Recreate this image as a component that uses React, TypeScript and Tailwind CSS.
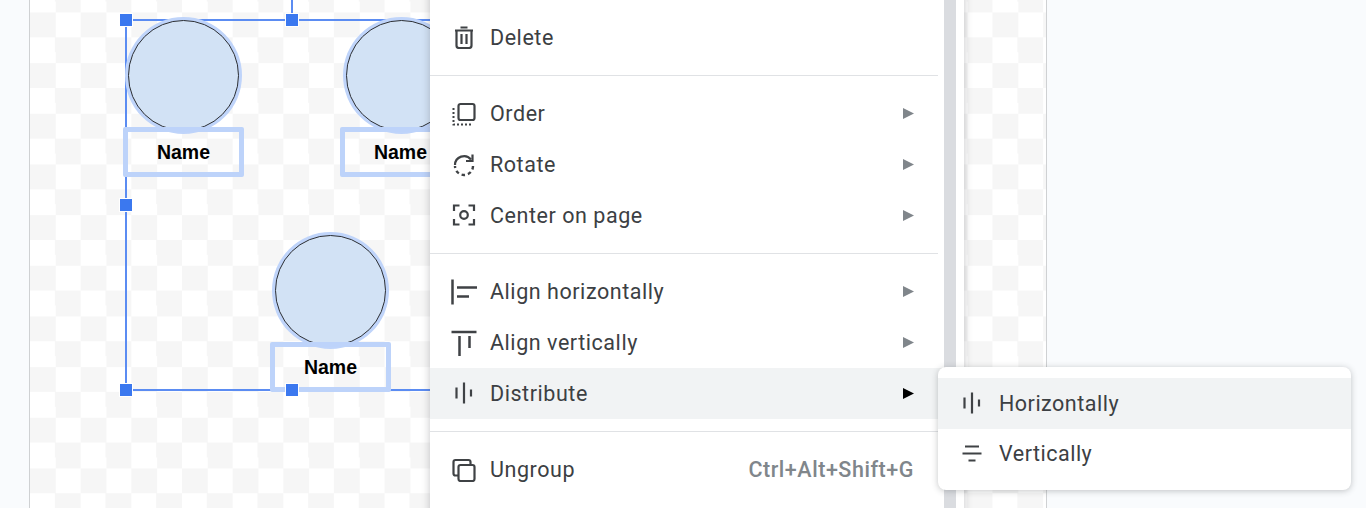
const stroke = { fill: "none", stroke: "#3f4245", strokeWidth: 2.2 };

function Handle({ x, y }: { x: number; y: number }) {
  return (
    <div
      className="absolute h-[14px] w-[14px] border border-white bg-[#3b78ef]"
      style={{ left: x - 37, top: y - 7 }}
    />
  );
}

function Person({ cx, cy, bx, by }: { cx: number; cy: number; bx: number; by: number }) {
  return (
    <>
      <div
        className="absolute h-[111px] w-[111px] rounded-full border-[1.5px] border-[#2b2e33] bg-[#d2e2f5] shadow-[0_0_0_3px_#bfd4fa]"
        style={{ left: cx - 85.5, top: cy - 55.5 }}
      />
      <div
        className="absolute flex h-[50px] w-[121px] items-center justify-center rounded-[2px] border-[5px] border-[#bdd3fa] pt-[1px] font-['Liberation_Sans',sans-serif] text-[19.500px] font-bold text-black"
        style={{ left: bx - 30, top: by }}
      >
        Name
      </div>
    </>
  );
}

function Arrow({ dark }: { dark?: boolean }) {
  return (
    <svg width="11" height="11" viewBox="0 0 11 11" className="shrink-0">
      <path d="M0 0L11 5.5L0 11Z" fill={dark ? "#000000" : "#80868b"} />
    </svg>
  );
}

function DeleteIcon() {
  return (
    <svg width="24" height="24" viewBox="0 0 24 24" className="-mt-[1px]">
      <path d="M3 5.500H21M8.500 2.500H15.500" {...stroke} />
      <path d="M4.500 6V20.500Q4.500 23 7 23H17Q19.500 23 19.500 20.500V6" {...stroke} />
      <path d="M9.500 9V19M14.500 9V19" {...stroke} />
    </svg>
  );
}

function OrderIcon() {
  return (
    <svg width="24" height="24" viewBox="0 0 24 24">
      <rect x="6.500" y="2" width="16" height="16" rx="2" {...stroke} />
      <path d="M1.500 6V22.500H19" fill="none" stroke="#3f4245" strokeWidth="2" strokeDasharray="2 2" />
    </svg>
  );
}

function RotateIcon() {
  return (
    <svg width="24" height="24" viewBox="0 0 24 24">
      <path d="M3 12A9 9 0 0 1 19 6.500" {...stroke} />
      <path d="M20.500 1.500V8H14" {...stroke} />
      <path d="M21 13A9 9 0 0 1 3 13" fill="none" stroke="#3f4245" strokeWidth="2.400" strokeDasharray="3.500 3" />
    </svg>
  );
}

function CenterIcon() {
  return (
    <svg width="24" height="24" viewBox="0 0 24 24">
      <path d="M2 8V2.500H7.500M16.500 2.500H22V8M22 16V21.500H16.500M7.500 21.500H2V16" {...stroke} />
      <circle cx="12" cy="12" r="3.800" {...stroke} />
    </svg>
  );
}

function AlignHIcon() {
  return (
    <svg width="28" height="28" viewBox="0 0 28 28">
      <path d="M2.500 1.500V26.500" fill="none" stroke="#3f4245" strokeWidth="2.500" />
      <path d="M7 9.500H27M7 18.500H19" fill="none" stroke="#3f4245" strokeWidth="2.500" />
    </svg>
  );
}

function AlignVIcon() {
  return (
    <svg width="28" height="28" viewBox="0 0 28 28">
      <path d="M1.500 3H26.500" fill="none" stroke="#3f4245" strokeWidth="2.500" />
      <path d="M9.500 7V27M19.500 7V19" fill="none" stroke="#3f4245" strokeWidth="2.500" />
    </svg>
  );
}

function DistributeHIcon() {
  return (
    <svg width="24" height="24" viewBox="0 0 24 24">
      <path d="M4.500 6.500V17.500M12 1.500V22.500M19 8.500V15.500" fill="none" stroke="#3f4245" strokeWidth="2.200" />
    </svg>
  );
}

function DistributeVIcon() {
  return (
    <svg width="24" height="24" viewBox="0 0 24 24">
      <path d="M5 4.500H19M2.500 11.500H21.500M8.500 18.500H15.500" fill="none" stroke="#3f4245" strokeWidth="2.200" />
    </svg>
  );
}

function UngroupIcon() {
  return (
    <svg width="24" height="24" viewBox="0 0 24 24">
      <path d="M7 17.500H3.500Q1.500 17.500 1.500 15.500V4Q1.500 2 3.500 2H16.500Q18.500 2 18.500 4V7" {...stroke} />
      <rect x="6.500" y="7" width="16" height="16" rx="2" {...stroke} />
    </svg>
  );
}

function Row({
  icon,
  label,
  arrow,
  active,
  shortcut,
}: {
  icon: React.ReactNode;
  label: string;
  arrow?: boolean;
  active?: boolean;
  shortcut?: string;
}) {
  return (
    <div className={`flex h-[50.67px] items-center pr-[30px] ${active ? "bg-[#f1f3f4]" : ""}`}>
      <div className="flex w-[60px] shrink-0 items-center justify-center pl-[7px]">{icon}</div>
      <span className="flex-1 pt-[1px] text-[21.500px] tracking-[0.55px] text-[#3c4043]">{label}</span>
      {shortcut && <span className="text-[21.500px] font-medium tracking-[0.55px] text-[#80868b]">{shortcut}</span>}
      {arrow && <Arrow dark={active} />}
    </div>
  );
}

function Divider() {
  return <div className="my-[12.500px] mr-[6px] h-px bg-[#e0e2e5]" />;
}

export default function App() {
  return (
    <div className="relative flex h-[508px] w-[1366px] overflow-hidden bg-[#f9fbfd] font-['Roboto',sans-serif]">
      <div className="w-[29px] shrink-0" />

      <div className="relative h-full w-[1018px] shrink-0 border-x border-x-[#cfd1d3] bg-white bg-[repeating-conic-gradient(#f6f6f6_0_25%,#ffffff_0_50%)] bg-size-[50.67px_50.67px] bg-position-[0px_-13.33px]">
        {/* selection outline */}
        <div className="absolute left-[95px] top-[19px] h-[372px] w-[600px] border-b-2 border-l-2 border-t-2 border-[#5b8cf2]" />
        <div className="absolute left-[261px] top-0 h-[15px] w-[2px] bg-[#5b8cf2]" />

        <Person cx={183.500} cy={75} bx={123} by={127} />
        <Person cx={401} cy={75} bx={340} by={127} />
        <Person cx={330.500} cy={290} bx={270} by={342} />

        <Handle x={126} y={20} />
        <Handle x={292} y={20} />
        <Handle x={126} y={205} />
        <Handle x={126} y={390} />
        <Handle x={292} y={390} />
      </div>

      {/* context menu, clipped by the window */}
      <div className="absolute left-[430px] top-[-30px] flex h-[560px] w-[534px] bg-white shadow-[0_0_8px_rgba(60,64,67,0.3)]">
        <div className="w-[514px] shrink-0 pt-[42px]">
          <Row icon={<DeleteIcon />} label="Delete" />
          <Divider />
          <Row icon={<OrderIcon />} label="Order" arrow />
          <Row icon={<RotateIcon />} label="Rotate" arrow />
          <Row icon={<CenterIcon />} label="Center on page" arrow />
          <Divider />
          <Row icon={<AlignHIcon />} label="Align horizontally" arrow />
          <Row icon={<AlignVIcon />} label="Align vertically" arrow />
          <Row icon={<DistributeHIcon />} label="Distribute" arrow active />
          <Divider />
          <Row icon={<UngroupIcon />} label="Ungroup" shortcut="Ctrl+Alt+Shift+G" />
        </div>
        <div className="h-full w-[12px] bg-[#dadce0]" />
      </div>

      {/* submenu */}
      <div className="absolute left-[938px] top-[367px] w-[413px] rounded-[8px] bg-white py-[11px] shadow-[0_1px_6px_rgba(60,64,67,0.3)]">
        <div className="flex h-[50.67px] items-center bg-[#f1f3f4]">
          <div className="flex w-[61px] shrink-0 items-center justify-center pl-[6px]">
            <DistributeHIcon />
          </div>
          <span className="pt-[1px] text-[21.500px] tracking-[0.5px] text-[#3c4043]">Horizontally</span>
        </div>
        <div className="flex h-[50.67px] items-center">
          <div className="flex w-[61px] shrink-0 items-center justify-center pl-[6px]">
            <DistributeVIcon />
          </div>
          <span className="pt-[1px] text-[21.500px] tracking-[0.5px] text-[#3c4043]">Vertically</span>
        </div>
      </div>
    </div>
  );
}
